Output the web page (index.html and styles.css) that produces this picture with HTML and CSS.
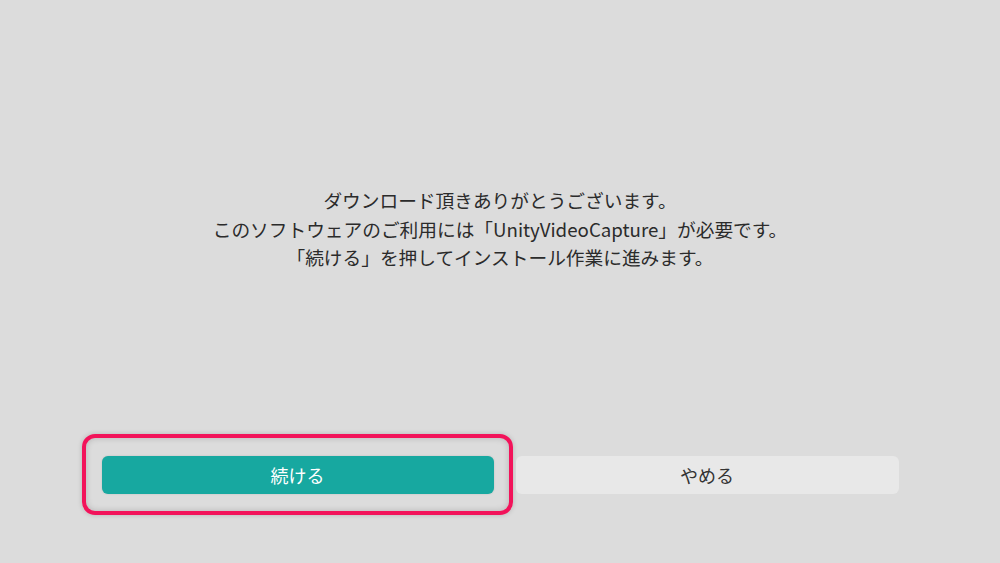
FILE: index.html
```html
<!DOCTYPE html>
<html lang="ja">
<head>
<meta charset="utf-8">
<link rel="stylesheet" href="styles.css">
</head>
<body>
<div class="screen">
  <div class="message">
    <p>ダウンロード頂きありがとうございます。</p>
    <p>このソフトウェアのご利用には「UnityVideoCapture」が必要です。</p>
    <p>「続ける」を押してインストール作業に進みます。</p>
  </div>
  <div class="actions">
    <button class="btn btn-primary">続ける<span class="focus-ring"></span></button>
    <button class="btn btn-secondary">やめる</button>
  </div>
</div>
</body>
</html>
```

FILE: styles.css
```css
html, body {
  margin: 0;
  padding: 0;
  background: #dcdcdc;
}
.screen {
  width: 1000px;
  height: 563px;
  display: flex;
  flex-direction: column;
  align-items: center;
  font-family: "Noto Sans CJK JP", "Noto Sans", sans-serif;
  color: #2b2b2b;
}
.message {
  padding-top: 186px;
  text-align: center;
  font-size: 18.7px;
  line-height: 28.5px;
}
.message p {
  margin: 0;
}
.actions {
  margin-top: 184px;
  display: flex;
  gap: 22px;
  width: 797px;
}
.btn {
  position: relative;
  height: 38px;
  border: none;
  border-radius: 6px;
  font-family: "Noto Sans CJK JP", "Noto Sans", sans-serif;
  font-size: 18px;
  padding: 0;
  line-height: 38px;
}
.btn-primary {
  width: 392px;
  background: #17a8a0;
  color: #ffffff;
  box-shadow: 0 0 2px rgba(0,0,0,0.15);
}
.btn-secondary {
  width: 383px;
  background: #e8e8e8;
  color: #333333;
}
.focus-ring {
  position: absolute;
  left: -20px;
  top: -22px;
  right: -19px;
  bottom: -21px;
  border: 4.5px solid #f2135a;
  border-radius: 13px;
  box-shadow: inset 0 0 6px rgba(0,0,0,0.18), 0 0 5px rgba(0,0,0,0.18);
  pointer-events: none;
}
```
